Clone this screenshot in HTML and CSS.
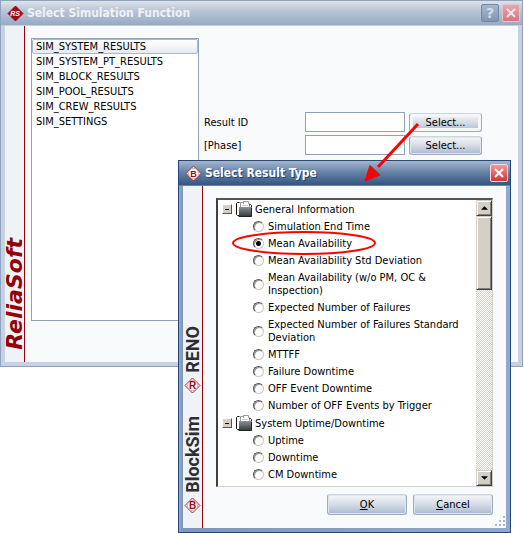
FILE: index.html
```html
<!DOCTYPE html>
<html lang="en">

<head>
  <meta charset="utf-8">
  <meta content="width=device-width, initial-scale=1.0" name="viewport">
  <title>Select Simulation Function</title>
  <link rel="stylesheet" href="styles.css">
</head>

<body>
  <svg class="defs" width="0" height="0" aria-hidden="true">
    <linearGradient id="fold" x1="0" y1="0" x2="0" y2="1">
      <stop offset="0" stop-color="#8b9294" />
      <stop offset="1" stop-color="#30383a" />
    </linearGradient>
    <symbol id="folder" viewBox="0 0 16 16">
      <path d="M4 7V1h8l2 2v4z" fill="#fff" />
      <path d="M4.500 6V1.500h3M7.500 3V.5h5v2h1V6" fill="none" stroke="#999" />
      <path d="M6 4.500h6" stroke="#ccc" />
      <path d="M3.500 1.500h-2l-1 1v11l1 1h2M13.500 3.500h1l1 1V7" fill="none" stroke="#111" />
      <path d="M3 6h13v9.500H3z" fill="url(#fold)" />
      <path d="M2.500 15.500h13V7" fill="none" stroke="#222" />
    </symbol>
    <symbol id="diamond" viewBox="0 0 17 17">
      <path d="M8.500 1L16 8.500 8.500 16 1 8.500z" fill="#f5eef0" stroke="#a32a33" stroke-linejoin="round" />
      <circle cx="8.500" cy="8.500" r="5" fill="#fff" stroke="#d9a5aa" />
    </symbol>
  </svg>

  <div class="desktop">
    <section class="window window-back">
      <header class="titlebar">
        <svg class="app-icon" viewBox="0 0 17 17">
          <path d="M8.500 1L16 8.500 8.500 16 1 8.500z" fill="#9d0b14" stroke="#9d0b14" stroke-linejoin="round" />
          <text class="icon-rs" x="8" y="11" text-anchor="middle">RS</text>
        </svg>
        <h1>Select Simulation Function</h1>
        <button class="caption-button help" aria-label="Help">?</button>
        <button class="caption-button close" aria-label="Close">
          <svg viewBox="0 0 16 16"><path d="M4 4l8 8M12 4l-8 8" /></svg>
        </button>
      </header>
      <div class="window-body">
        <aside class="rail">
          <span class="brand reliasoft">ReliaSoft</span>
        </aside>
        <div class="function-pane">
          <ul class="function-list">
            <li class="selected">SIM_SYSTEM_RESULTS</li>
            <li>SIM_SYSTEM_PT_RESULTS</li>
            <li>SIM_BLOCK_RESULTS</li>
            <li>SIM_POOL_RESULTS</li>
            <li>SIM_CREW_RESULTS</li>
            <li>SIM_SETTINGS</li>
          </ul>
          <form class="arguments">
            <div class="field">
              <label for="result-id">Result ID</label>
              <input type="text" id="result-id">
              <button type="button" class="button small focused">Select...</button>
            </div>
            <div class="field">
              <label for="phase">[Phase]</label>
              <input type="text" id="phase">
              <button type="button" class="button small">Select...</button>
            </div>
          </form>
        </div>
      </div>
    </section>

    <section class="window window-front">
      <header class="titlebar">
        <svg class="app-icon" viewBox="0 0 17 17">
          <use href="#diamond" />
          <text class="icon-letter" x="8.500" y="12" text-anchor="middle">B</text>
        </svg>
        <h1>Select Result Type</h1>
        <button class="caption-button close" aria-label="Close">
          <svg viewBox="0 0 16 16"><path d="M4 4l8 8M12 4l-8 8" /></svg>
        </button>
      </header>
      <div class="window-body">
        <aside class="rail">
          <span class="brand">RENO</span>
          <svg class="rail-icon" viewBox="0 0 17 17">
            <use href="#diamond" />
            <text class="icon-letter" x="8.500" y="12" text-anchor="middle">R</text>
          </svg>
          <span class="brand blocksim">BlockSim</span>
          <svg class="rail-icon" viewBox="0 0 17 17">
            <use href="#diamond" />
            <text class="icon-letter" x="8.500" y="12" text-anchor="middle">B</text>
          </svg>
        </aside>
        <form class="result-pane">
          <div class="tree">
            <div class="tree-items">
              <div class="group">
                <button type="button" class="toggle" aria-label="Collapse"></button>
                <svg class="folder"><use href="#folder" /></svg>
                <span>General Information</span>
              </div>
              <label class="option"><input type="radio" name="result"><span>Simulation End Time</span></label>
              <label class="option picked"><input type="radio" name="result" checked><span>Mean Availability</span>
                <svg class="ring" viewBox="0 0 146 24"><ellipse cx="73" cy="12" rx="71" ry="11" /></svg>
              </label>
              <label class="option"><input type="radio" name="result"><span>Mean Availability Std Deviation</span></label>
              <label class="option"><input type="radio" name="result"><span>Mean Availability (w/o PM, OC &amp;<br>Inspection)</span></label>
              <label class="option"><input type="radio" name="result"><span>Expected Number of Failures</span></label>
              <label class="option"><input type="radio" name="result"><span>Expected Number of Failures Standard<br>Deviation</span></label>
              <label class="option"><input type="radio" name="result"><span>MTTFF</span></label>
              <label class="option"><input type="radio" name="result"><span>Failure Downtime</span></label>
              <label class="option"><input type="radio" name="result"><span>OFF Event Downtime</span></label>
              <label class="option"><input type="radio" name="result"><span>Number of OFF Events by Trigger</span></label>
              <div class="group">
                <button type="button" class="toggle" aria-label="Collapse"></button>
                <svg class="folder"><use href="#folder" /></svg>
                <span>System Uptime/Downtime</span>
              </div>
              <label class="option"><input type="radio" name="result"><span>Uptime</span></label>
              <label class="option"><input type="radio" name="result"><span>Downtime</span></label>
              <label class="option"><input type="radio" name="result"><span>CM Downtime</span></label>
            </div>
            <div class="scrollbar">
              <button type="button" class="scroll-part" aria-label="Scroll up">
                <svg viewBox="0 0 8 4"><path d="M4 0l4 4H0z" /></svg>
              </button>
              <div class="scroll-part thumb"></div>
              <button type="button" class="scroll-part down" aria-label="Scroll down">
                <svg viewBox="0 0 8 4"><path d="M0 0h8L4 4z" /></svg>
              </button>
            </div>
          </div>
          <div class="actions">
            <button type="button" class="button"><u>O</u>K</button>
            <button type="button" class="button"><u>C</u>ancel</button>
          </div>
        </form>
      </div>
      <svg class="grip" viewBox="0 0 12 12">
        <path d="M9 0h2v2h-2zM5 4h2v2h-2zM9 4h2v2h-2zM1 8h2v2h-2zM5 8h2v2h-2zM9 8h2v2h-2z" />
      </svg>
    </section>

    <!-- callout from the first Select... button to the dialog -->
    <svg class="arrow" viewBox="0 0 60 64">
      <path d="M55 4L15 47" stroke="#f00" stroke-width="3" />
      <path d="M2 61L7 45.500 17 55z" fill="#f00" stroke="#f00" />
    </svg>
  </div>
</body>

</html>
```
FILE: styles.css
```css
*,
*::before,
*::after {
  box-sizing: border-box;
}

body {
  margin: 0;
  background: #fff;
  color: #000;
  font: 11px/13px "DejaVu Sans Condensed", "DejaVu Sans", Tahoma, sans-serif;
  font-stretch: condensed;
}

button,
input {
  font: inherit;
  color: inherit;
  margin: 0;
  padding: 0;
}

.defs {
  position: absolute;
}

/* both windows share one cell, the dialog overlaps the first */
.desktop {
  position: relative;
  display: grid;
}

.window {
  grid-area: 1 / 1;
  display: flex;
  flex-direction: column;
  border: 1px solid #8ea3c0;
}

.window-back {
  align-self: start;
  margin-right: 1px;
  min-height: 367px;
  background: #c8d1df;
}

.window-front {
  position: relative;
  margin: 160px 13px 0 178px;
  border-color: #23477a;
  background: linear-gradient(90deg, #93a9c9, #7e96b9 4px, #93a9c9);
}

.titlebar {
  display: flex;
  align-items: center;
  height: 25px;
  padding: 0 2px 0 6px;
  background: linear-gradient(#dce3ea, #b6c3d4 45%, #98aac3);
  border-bottom: 1px solid #c4cedb;
}

.window-front .titlebar {
  background: linear-gradient(#a5b6cc, #6984a9 45%, #345580);
  border-bottom-color: #6983a8;
}

.titlebar h1 {
  flex: 1;
  margin: 0 0 0 3px;
  font-size: 12px;
  line-height: 16px;
  color: #eef2f7;
}

.window-front h1 {
  color: #fff;
  text-shadow: 1px 1px #23406a;
}

.app-icon,
.rail-icon {
  width: 17px;
  height: 17px;
  flex: none;
}

.icon-rs {
  font: italic bold 7px "Liberation Sans", sans-serif;
  fill: #fff;
}

.icon-letter {
  font: bold 9px "Liberation Sans", sans-serif;
  fill: #9d0b14;
}

.rail .icon-letter {
  font-size: 10px;
}

.caption-button {
  width: 18px;
  height: 18px;
  margin-left: 3px;
  border: 1px solid #e8c3cc;
  border-radius: 2px;
  background: linear-gradient(#e3a9b1, #d8737c);
}

.caption-button svg {
  display: block;
  width: 16px;
  height: 16px;
  fill: none;
  stroke: #fff;
  stroke-width: 2;
}

.window-back .caption-button svg {
  stroke: #f3e5e9;
}

.caption-button.help {
  border-color: #7189a8;
  background: linear-gradient(#a8b8cb, #7e96b4);
  color: #d5deea;
  font: bold 14px/14px "DejaVu Sans", sans-serif;
}

.window-front .caption-button {
  border-color: #f3dadd;
  background: linear-gradient(#ef9a9a, #d53131);
}

.window-body {
  flex: 1;
  display: flex;
  margin: 0 4px 4px;
  background: #f8fafc;
}

.window-front .window-body {
  min-height: 342px;
}

/* branded strip down the left side */
.rail {
  display: flex;
  flex-direction: column;
  justify-content: flex-end;
  align-items: center;
  flex: none;
  width: 20px;
  padding-bottom: 12px;
  border-right: 1px solid #930209;
  background: #eff3f6;
}

.window-front .rail {
  padding-bottom: 14px;
}

.brand {
  writing-mode: vertical-rl;
  transform: rotate(180deg);
  margin-bottom: 4px;
  font: bold 18px/18px Roboto, sans-serif;
  color: #2d2d33;
}

.brand.blocksim {
  margin-top: 22px;
}

.brand.reliasoft {
  margin: 0;
  font: italic bold 22px/18px "DejaVu Sans", sans-serif;
  color: #930209;
}

/* function list and its arguments */
.function-pane {
  flex: 1;
  display: flex;
  align-items: flex-start;
  padding: 12px 36px 0 6px;
}

.function-list {
  flex: none;
  width: 168px;
  height: 283px;
  margin: 0;
  padding: 0;
  list-style: none;
  border: 1px solid #8ca2bd;
  background: #fff;
}

.function-list li {
  height: 15px;
  padding: 1px 4px;
}

.function-list .selected {
  border: 1px solid #a9b9cf;
  border-radius: 2px;
  padding: 0 3px;
  background: linear-gradient(#fff, #e6eaef);
}

.arguments {
  flex: 1;
  display: grid;
  gap: 3px;
  padding: 74px 0 0 5px;
}

.field {
  display: flex;
  align-items: center;
}

.field label {
  flex: 1;
}

.field input {
  width: 100px;
  height: 20px;
  border: 1px solid #8ca2bd;
  background: #fff;
}

.button {
  width: 80px;
  height: 21px;
  border: 1px solid #9aabc5;
  border-top-color: #cdd5e0;
  border-radius: 3px;
  background: linear-gradient(#f5f7f9, #d5dce6 50%, #abb9cf);
  box-shadow: inset 0 0 0 1px #dfe5ed;
}

.button.small {
  width: 73px;
  height: 19px;
  margin-left: 4px;
}

.button.focused {
  box-shadow: inset 0 0 0 3px #f4f6fa;
}

/* result tree */
.result-pane {
  flex: 1;
  padding: 12px 13px 12px;
}

.tree {
  display: flex;
  height: 289px;
  border: 2px solid #404040;
  border-top-color: #555;
  border-right: 1px solid #d4d0c8;
  border-bottom: 1px solid #d4d0c8;
  background: #fff;
}

.tree-items {
  flex: 1;
  overflow: hidden;
}

.group {
  display: flex;
  align-items: center;
  height: 18px;
  padding-left: 4px;
}

.toggle {
  position: relative;
  width: 10px;
  height: 10px;
  border: 1px solid #fff;
  border-right-color: #555;
  border-bottom-color: #555;
  background: #d4d0c8;
}

.toggle::after {
  content: "";
  display: block;
  width: 4px;
  height: 1px;
  margin: 0 auto;
  background: #000;
}

.folder {
  width: 16px;
  height: 16px;
  margin: 0 3px 0 4px;
}

.option {
  position: relative;
  display: flex;
  align-items: center;
  padding: 2px 0 2px 35px;
}

.option input {
  appearance: none;
  flex: none;
  width: 11px;
  height: 11px;
  margin: 0 4px 0 0;
  border: 1px solid;
  border-color: #555 #ccc8c0 #ccc8c0 #555;
  border-radius: 50%;
  box-shadow: inset 1px 1px #999;
}

.option input:checked {
  background: radial-gradient(circle, #000 2px, #fff 3px);
}

.ring {
  position: absolute;
  left: 13px;
  top: -4px;
  width: 146px;
  height: 24px;
  fill: none;
  stroke: #f00;
  stroke-width: 2;
}

.option.picked {
  z-index: 1;
}

.scrollbar {
  display: flex;
  flex-direction: column;
  width: 16px;
  background: repeating-conic-gradient(#d4d0c8 0 25%, #fff 0 50%) 0 0 / 2px 2px;
}

.scroll-part {
  display: grid;
  place-items: center;
  height: 16px;
  border: 1px solid #d4d0c8;
  border-right-color: #404040;
  border-bottom-color: #404040;
  background: #d4d0c8;
  box-shadow: inset 1px 1px #fff, inset -1px -1px #808080;
}

.scroll-part svg {
  width: 7px;
  height: 4px;
}

.scroll-part.thumb {
  height: 74px;
}

.scroll-part.down {
  margin-top: auto;
}

.actions {
  display: flex;
  justify-content: flex-end;
  gap: 6px;
  padding-top: 7px;
}

.grip {
  position: absolute;
  right: 4px;
  bottom: 4px;
  width: 12px;
  height: 12px;
  fill: #a9b9d2;
}

.arrow {
  position: absolute;
  top: 120px;
  right: 101px;
  width: 60px;
  height: 64px;
}
```
